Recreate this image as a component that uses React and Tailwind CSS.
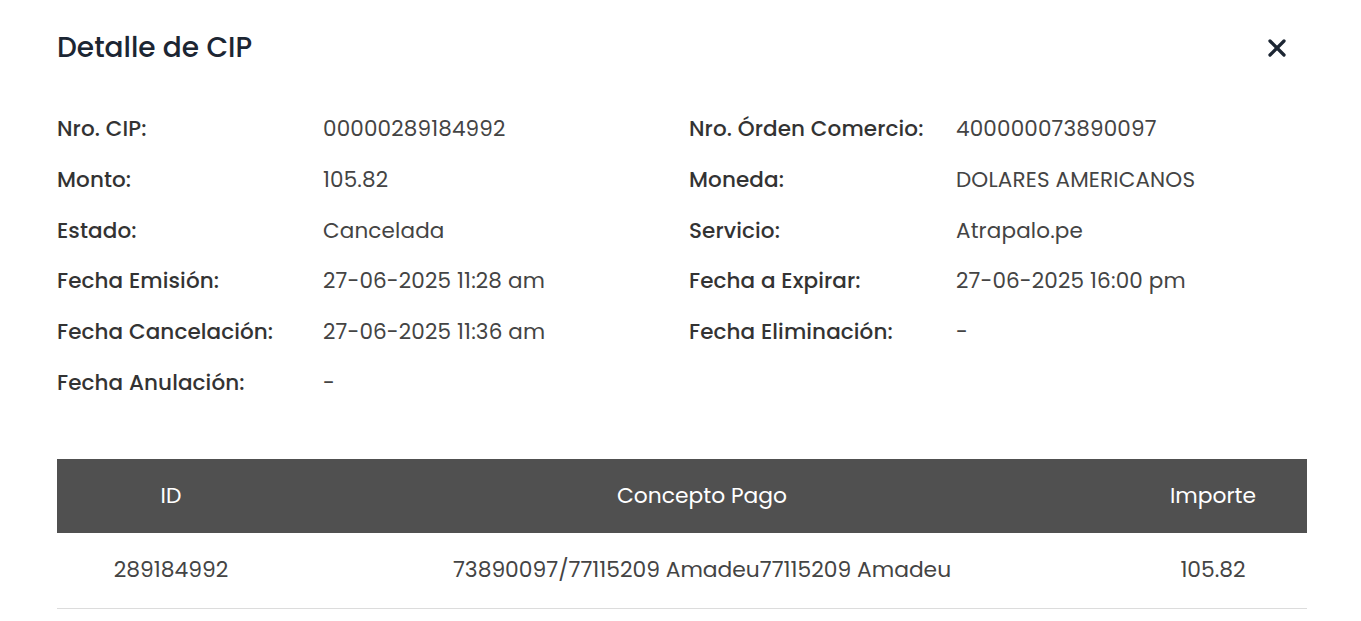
import { X } from 'lucide-react';

const left = [
  ['Nro. CIP:', '00000289184992'],
  ['Monto:', '105.82'],
  ['Estado:', 'Cancelada'],
  ['Fecha Emisión:', '27-06-2025 11:28 am'],
  ['Fecha Cancelación:', '27-06-2025 11:36 am'],
  ['Fecha Anulación:', '-'],
];

const right = [
  ['Nro. Órden Comercio:', '400000073890097'],
  ['Moneda:', 'DOLARES AMERICANOS'],
  ['Servicio:', 'Atrapalo.pe'],
  ['Fecha a Expirar:', '27-06-2025 16:00 pm'],
  ['Fecha Eliminación:', '-'],
];

export default function App() {
  const rows = left.map((l, i) => [l, right[i]]);

  return (
    <div className="min-h-[621px] bg-white font-['Poppins','Inter',sans-serif] text-[#444]">
      <div className="pl-[57px] pr-[54px] pt-[27px]">
        <div className="flex items-center justify-between">
          <h2 className="text-[28px] font-medium text-[#1c2633]">Detalle de CIP</h2>
          <button className="mr-[16px] text-[#1c2633]">
            <X className="w-7 h-7" strokeWidth={2.8} />
          </button>
        </div>

        <div className="mt-[35px] text-[21.5px]">
          {rows.map(([l, r], i) => (
            <div key={i} className="grid grid-cols-[266px_366px_267px_1fr] h-[50.7px] items-center">
              <div className="font-medium text-[#333] tracking-[0.1px]">{l[0]}</div>
              <div className="tracking-[0.15px]">{l[1]}</div>
              <div className="font-medium text-[#333] tracking-[0.1px]">{r ? r[0] : ''}</div>
              <div className="tracking-[0.15px]">{r ? r[1] : ''}</div>
            </div>
          ))}
        </div>

        <table className="mt-[51px] w-full text-[21.8px]">
          <thead>
            <tr className="bg-[#505050] text-white h-[74px]">
              <th className="w-[228px] font-normal">ID</th>
              <th className="font-normal">Concepto Pago</th>
              <th className="w-[188px] font-normal">Importe</th>
            </tr>
          </thead>
          <tbody>
            <tr className="h-[75px] border-b border-[#dcdcdc] text-center">
              <td>289184992</td>
              <td>73890097/77115209 Amadeu77115209 Amadeu</td>
              <td>105.82</td>
            </tr>
          </tbody>
        </table>
      </div>
    </div>
  );
}
